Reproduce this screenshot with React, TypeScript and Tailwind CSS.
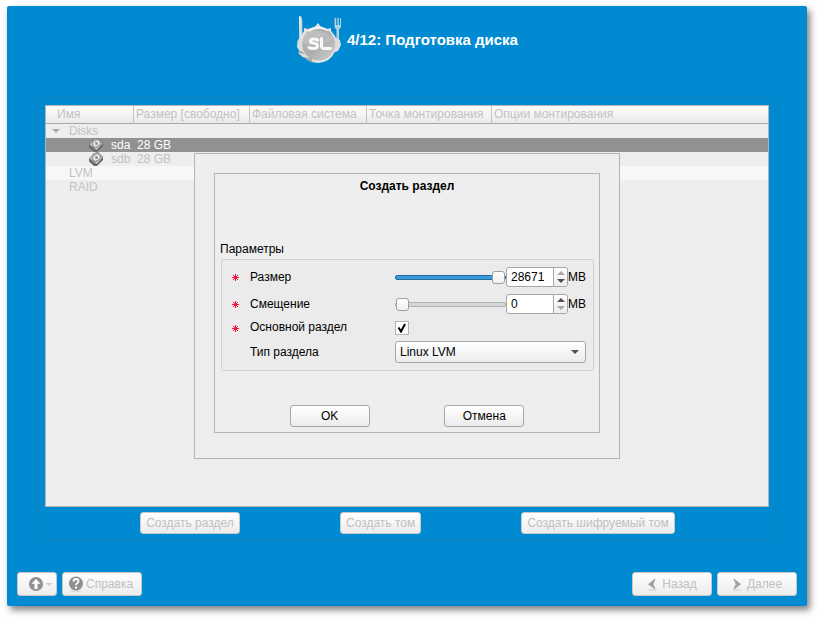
import { useId, useState } from 'react'
import type { ReactNode } from 'react'

const MAX = 28671

const raised = 'rounded-[3px] border bg-linear-to-b from-white to-[#ececec]'

function Logo() {
  return (
    <svg width="48" height="50" viewBox="0 0 48 50" aria-hidden="true" className="shrink-0">
      <defs>
        <linearGradient id="plate" x1="0" y1="0" x2="1" y2="1">
          <stop offset="0" stopColor="#bdbdbd" />
          <stop offset="0.5" stopColor="#adadad" />
          <stop offset="1" stopColor="#cfcfcf" />
        </linearGradient>
        <linearGradient id="steel" x1="0" y1="0" x2="1" y2="0">
          <stop offset="0" stopColor="#f4f4f4" />
          <stop offset="1" stopColor="#c3ccd2" />
        </linearGradient>
      </defs>
      <path d="M3 1.500C5 0 6.300 3 6.300 8L6.500 26H3.300z" fill="url(#steel)" />
      <path d="M38.500 3v8q0 3 2 3.500V26h2.500V14.500q2-.5 2-3.500V3h-1v7h-1.200V3h-1.400v7h-1.200V3z" fill="#b4d0e2" />
      <path d="M18 12q2-1 4-4 2 3 4 4l5 2 4-1v3l4 5q2 7 0 15-4 11-17 12-13-1-18-12-1-8 1-15l3-5v-3l4 1z" fill="#e4e4e4" />
      <path d="M4 22l-2.500 4L1 32l3 5 4 2zM39 22l5 3 1 5-3 6-5 2z" fill="#dcdcdc" />
      <circle cx="22.500" cy="29" r="16.500" fill="url(#plate)" />
      <path d="M8 20q14-9 30 2-8 10-32 7z" fill="#fff" opacity=".14" />
      <path d="M12 15q10-7 21 0l-2 1q-8-5-18 1z" fill="#f3f3f3" />
      <path d="M20 19l2.500 2 2.500-2z" fill="#ccc" />
      <path d="M6 36q4 6 9 6l2 6q-6-3-7-5-4 0-8-6z" fill="#a8a8a8" />
      <path d="M2 38q7 0 12 5l-7-1z" fill="#dedede" />
      <path
        d="M22 25.200q-2-1.200-4.500-1.200-3 0-3 2t3 2.200q4 .3 4 2.600 0 2.700-4 2.700-3 0-4.500-1M25.500 23.500v7.500q0 2.500 3 2.500h6"
        fill="none"
        stroke="#fafafa"
        strokeWidth="3"
        strokeLinecap="round"
      />
    </svg>
  )
}

function DiskIcon() {
  return (
    <svg width="16" height="14" viewBox="0 0 16 14" aria-hidden="true" className="shrink-0">
      <path d="M1 6.500L6 1l4-1 5 5v3l-6 6H6L1 9.500z" fill="#6a6a6a" />
      <path d="M1.500 6.500L6.500 1.200 10 .8 14.500 5.500 8.500 12z" fill="#c4c4c4" />
      <ellipse cx="8.500" cy="5.500" rx="4.200" ry="3.200" transform="rotate(-35 8.500 5.500)" fill="#efefef" stroke="#777" strokeWidth=".8" />
      <circle cx="8.500" cy="5.500" r="1.500" fill="#8a8a8a" />
      <path d="M3.500 8l3.500 3" stroke="#888" strokeWidth="1.200" />
    </svg>
  )
}

function Required() {
  return (
    <svg width="7" height="7" viewBox="0 0 7 7" aria-hidden="true" shapeRendering="crispEdges" className="mt-px">
      <path d="M0 3h7v1H0zM3 0h1v7H3zM1 1h1v1H1zM2 2h1v1H2zM4 4h1v1H4zM5 5h1v1H5zM5 1h1v1H5zM4 2h1v1H4zM2 4h1v1H2zM1 5h1v1H1z" fill="#f8103c" />
    </svg>
  )
}

function Triangle({ up, dim }: { up?: boolean; dim?: boolean }) {
  return (
    <svg width="8" height="4" viewBox="0 0 8 4" aria-hidden="true">
      <path d={up ? 'M0 4L4 0l4 4z' : 'M0 0l4 4 4-4z'} fill={dim ? '#a8a8a8' : '#505050'} />
    </svg>
  )
}

function AmountRow({ label, initial }: { label: string; initial: number }) {
  const id = useId()
  const [value, setValue] = useState(initial)
  const set = (n: number) => setValue(Math.min(MAX, Math.max(0, n || 0)))
  const share = (value / MAX) * 100
  return (
    <>
      <Required />
      <label htmlFor={id}>{label}</label>
      <div className="flex h-5 items-center">
        <input
          type="range"
          aria-label={label}
          min={0}
          max={MAX}
          value={value}
          onChange={(e) => set(Number(e.target.value))}
          style={{ backgroundImage: `linear-gradient(to right, #3a9bdc ${share}%, #d6d6d6 ${share}%)` }}
          className={`h-[5px] min-w-0 flex-1 appearance-none rounded-[2px] border [&::-webkit-slider-thumb]:size-[13px] [&::-webkit-slider-thumb]:appearance-none [&::-webkit-slider-thumb]:rounded-[3px] [&::-webkit-slider-thumb]:border [&::-webkit-slider-thumb]:border-[#a0a0a0] [&::-webkit-slider-thumb]:bg-linear-to-b [&::-webkit-slider-thumb]:from-white [&::-webkit-slider-thumb]:to-[#f0f0f0] ${
            value > 0 ? 'border-[#246a9c]' : 'border-[#b0b0b0]'
          }`}
        />
        <div className="flex h-5 w-[62px] rounded-[3px] border border-[#a6a6a6] bg-white">
          <input
            id={id}
            type="text"
            value={value}
            onChange={(e) => set(Number(e.target.value))}
            className="w-[46px] rounded-l-[3px] pl-1 outline-none"
          />
          <div className="flex flex-1 flex-col rounded-r-[3px] border-l border-[#a6a6a6] bg-linear-to-b from-white to-[#ececec]">
            <button type="button" aria-label={`${label} +`} onClick={() => set(value + 1)} className="flex flex-1 items-end justify-center pb-0.5">
              <Triangle up dim={value === MAX} />
            </button>
            <button type="button" aria-label={`${label} −`} onClick={() => set(value - 1)} className="flex flex-1 items-start justify-center pt-0.5">
              <Triangle dim={value === 0} />
            </button>
          </div>
        </div>
        <span>MB</span>
      </div>
    </>
  )
}

function CreateDialog() {
  const [primary, setPrimary] = useState(true)
  return (
    <div
      role="dialog"
      aria-labelledby="dialog-title"
      className="absolute top-[47px] left-1/2 w-[426px] -translate-x-1/2 border border-[#b4b4b4] bg-[#eee] px-[19px] pt-[19px] pb-[25px] text-black"
    >
      <form onSubmit={(e) => e.preventDefault()} className="border border-[#b4b4b4] pt-1 pb-[5px]">
        <h2 id="dialog-title" className="text-center font-bold">
          Создать раздел
        </h2>
        <h3 id="params" className="mt-[47px] ml-[5px]">
          Параметры
        </h3>
        <div
          role="group"
          aria-labelledby="params"
          className="mt-[2px] mr-[5px] ml-[6px] grid grid-cols-[7px_1fr_191px] items-center gap-y-[7px] rounded-[2px] border border-[#d2d2d2] bg-[#ebebeb] py-[7px] pr-[7px] pl-[10px] [&>label]:pl-[11px]"
        >
          <AmountRow label="Размер" initial={MAX} />
          <AmountRow label="Смещение" initial={0} />
          <Required />
          <label htmlFor="primary" className="leading-[13px]">
            Основной раздел
          </label>
          <span className="relative flex size-[13px] items-center justify-center">
            <input
              id="primary"
              type="checkbox"
              checked={primary}
              onChange={(e) => setPrimary(e.target.checked)}
              className="size-[14px] shrink-0 appearance-none border border-[#b4b4b4] bg-white"
            />
            {primary && (
              <svg width="10" height="10" viewBox="0 0 10 10" aria-hidden="true" className="pointer-events-none absolute">
                <path d="M1.500 4.500L4 8.500 8 1" fill="none" stroke="#000" strokeWidth="2" />
              </svg>
            )}
          </span>
          <span />
          <label htmlFor="kind">Тип раздела</label>
          <span className="relative flex">
            <select id="kind" defaultValue="lvm" className={`${raised} h-[22px] w-full appearance-none border-[#a6a6a6] pl-1`}>
              <option value="lvm">Linux LVM</option>
            </select>
            <span className="pointer-events-none absolute inset-y-0 right-[7px] flex items-center">
              <Triangle />
            </span>
          </span>
        </div>
        <div className="mt-[34px] flex justify-evenly">
          <button type="submit" className={`${raised} h-[22px] w-20 border-[#a6a6a6]`}>
            OK
          </button>
          <button type="button" className={`${raised} h-[22px] w-20 border-[#a6a6a6]`}>
            Отмена
          </button>
        </div>
      </form>
    </div>
  )
}

function VolumeTable() {
  return (
    <table className="w-full table-fixed border-separate border-spacing-0 text-left text-[#c2c2c2]">
      <colgroup>
        <col className="w-[88px]" />
        <col className="w-[116px]" />
        <col className="w-[117px]" />
        <col className="w-[125px]" />
        <col />
      </colgroup>
      <thead className="bg-linear-to-b from-white to-[#e8e8e8] leading-[17px] whitespace-nowrap [&_th]:border-b [&_th]:border-b-[#a8a8a8] [&_th]:p-0 [&_th]:pl-[2px] [&_th]:font-normal">
        <tr>
          <th className="border-r border-r-[#c4c4c4]">
            <span className="pl-[9px]">Имя</span>
          </th>
          <th className="border-r border-r-[#c4c4c4]">Размер [свободно]</th>
          <th className="border-r border-r-[#c4c4c4]">Файловая система</th>
          <th className="border-r border-r-[#c4c4c4]">Точка монтирования</th>
          <th>Опции монтирования</th>
        </tr>
      </thead>
      <tbody className="leading-[14px] [&_td]:h-[14px] [&_td]:p-0">
        <tr>
          <td colSpan={5}>
            <span className="flex items-center gap-[9px] pl-[6px]">
              <Triangle dim />
              Disks
            </span>
          </td>
        </tr>
        <tr className="bg-[#919191] text-white">
          <td>
            <span className="flex gap-[7px] pl-[42px]">
              <DiskIcon />
              sda
            </span>
          </td>
          <td colSpan={4}>
            <span className="pl-[3px]">28 GB</span>
          </td>
        </tr>
        <tr>
          <td>
            <span className="flex gap-[7px] pl-[42px]">
              <DiskIcon />
              sdb
            </span>
          </td>
          <td colSpan={4}>
            <span className="pl-[3px]">28 GB</span>
          </td>
        </tr>
        <tr className="bg-[#f7f7f7]">
          <td colSpan={5}>
            <span className="pl-[23px]">LVM</span>
          </td>
        </tr>
        <tr>
          <td colSpan={5}>
            <span className="pl-[23px]">RAID</span>
          </td>
        </tr>
      </tbody>
    </table>
  )
}

function ActionButton({ children }: { children: ReactNode }) {
  return (
    <button type="button" disabled className={`${raised} h-[22px] min-w-20 border-[#c8c8c8] px-[5px] text-[#c0c0c0]`}>
      {children}
    </button>
  )
}

function NavButton({ children, label, className }: { children: ReactNode; label?: string; className: string }) {
  return (
    <button
      type="button"
      disabled
      aria-label={label}
      className={`${raised} ${className} flex h-6 items-center border-[#c8c8c8] text-[#c0c0c0]`}
    >
      {children}
    </button>
  )
}

function Chevron({ back }: { back?: boolean }) {
  return (
    <svg width="10" height="14" viewBox="0 0 10 14" aria-hidden="true">
      <ellipse cx="5" cy="13" rx="4.500" ry="1" fill="#ddd" />
      <path d={back ? 'M8 2L1.500 7.200 8 12 6 7.200z' : 'M2 2l6.500 5.200L2 12l2-4.800z'} fill="#a0a0a0" stroke="#a0a0a0" strokeWidth=".8" />
    </svg>
  )
}

export default function App() {
  return (
    <div className="flex min-h-screen bg-white pt-1.5 pr-[13px] pb-[14px] pl-[7px] font-['Liberation_Sans',Arial,sans-serif] text-[12px] leading-4">
      <main className="flex flex-1 flex-col rounded-[2px] bg-[#008ad2] px-2.5 pb-2.5 shadow-[3px_4px_7px_rgba(0,0,0,0.5)]">
        <header className="flex h-[92px] justify-center gap-[3px] pt-[9px]">
          <Logo />
          <h1 className="pt-4 text-[15px] leading-[18px] font-bold text-white">4/12: Подготовка диска</h1>
        </header>

        <section className="mr-[21px] ml-[22px] flex flex-1 flex-col border border-[#1480b8] pt-1.5 pb-1.5">
          <div className="relative mr-[6px] ml-[5px] flex-1 border border-[#b4b4b4] bg-[#eee]">
            <VolumeTable />
            <CreateDialog />
          </div>
          <div className="mt-[5px] flex justify-evenly">
            <ActionButton>Создать раздел</ActionButton>
            <ActionButton>Создать том</ActionButton>
            <ActionButton>Создать шифруемый том</ActionButton>
          </div>
        </section>

        <footer className="mt-[31px] flex gap-[5px]">
          <NavButton label="Меню" className="w-10 justify-end gap-0.5 pr-1">
            <svg width="16" height="16" viewBox="0 0 16 16" aria-hidden="true">
              <circle cx="8" cy="8" r="7" fill="#919191" />
              <path d="M8 3l4.500 4.800h-3V13h-3V7.800h-3z" fill="#fff" />
            </svg>
            <svg width="6" height="3" viewBox="0 0 6 3" aria-hidden="true">
              <path d="M0 0l3 3 3-3z" fill="#ccc" />
            </svg>
          </NavButton>
          <NavButton className="w-20 gap-[2px] pl-[5px]">
            <svg width="16" height="16" viewBox="0 0 16 16" aria-hidden="true">
              <ellipse cx="8" cy="15" rx="6" ry="1" fill="#ddd" />
              <circle cx="8" cy="7.500" r="7" fill="#8f8f8f" />
              <path d="M5.500 5.500q0-2.500 2.500-2.500t2.500 2.200q0 1.300-1.300 2Q8 8 8 9.200" fill="none" stroke="#fff" strokeWidth="1.800" />
              <circle cx="8" cy="11.600" r="1.200" fill="#fff" />
            </svg>
            Справка
          </NavButton>
          <div className="flex-1" />
          <NavButton className="w-20 justify-center gap-[5px]">
            <Chevron back />
            Назад
          </NavButton>
          <NavButton className="w-20 justify-center gap-[5px]">
            <Chevron />
            Далее
          </NavButton>
        </footer>
      </main>
    </div>
  )
}
